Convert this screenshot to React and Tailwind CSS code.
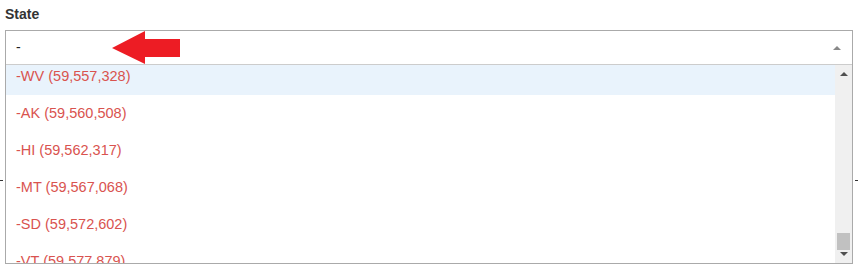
const states = [
  { code: 'WV', total: '59,557,328' },
  { code: 'AK', total: '59,560,508' },
  { code: 'HI', total: '59,562,317' },
  { code: 'MT', total: '59,567,068' },
  { code: 'SD', total: '59,572,602' },
  { code: 'VT', total: '59,577,879' },
];

function Triangle({ dir = 'up', color = '#505050', w = 8, h = 4 }) {
  const pts = dir === 'up' ? `0,${h} ${w / 2},0 ${w},${h}` : `0,0 ${w / 2},${h} ${w},0`;
  return (
    <svg width={w} height={h} viewBox={`0 0 ${w} ${h}`}>
      <polygon points={pts} fill={color} />
    </svg>
  );
}

function FakeScrollbar() {
  return (
    <div className="w-[17px] flex flex-col bg-[#f0f0f0]">
      <div className="h-[17px] flex items-center justify-center">
        <Triangle dir="up" w={8} h={4} />
      </div>
      <div className="flex-1 flex flex-col justify-end items-center">
        <div className="w-[13px] h-[17px] bg-[#c1c1c1]" />
      </div>
      <div className="h-[13px] flex justify-center pt-[2px]">
        <Triangle dir="down" w={8} h={4} />
      </div>
    </div>
  );
}

export default function App() {
  return (
    <div className="w-[858px] h-[271px] bg-white relative overflow-hidden font-['Liberation_Sans',Arial,sans-serif]">
      {/* dashed line behind the dropdown */}
      <div className="absolute left-0 right-0 top-[180px] border-t border-dashed border-[#333]" />

      <div className="relative pt-[4px] pl-[5px]">
        <div className="text-[14px] leading-[20px] font-bold text-[#333] mb-[6px]">State</div>

        <div className="w-[848px] h-[234px] border border-[#aaa] bg-white flex flex-col">
          <div className="h-[34px] flex items-center justify-between pl-[10px] pr-[11px] border-b border-[#ccc]">
            <span className="text-[14px] text-[#222]">-</span>
            <Triangle dir="up" color="#888" w={8} h={4} />
          </div>

          <div className="flex-1 flex min-h-0">
            <ul className="flex-1 overflow-hidden">
              <div className="-mt-[7px]">
                {states.map((s, i) => (
                  <li
                    key={s.code}
                    className={`h-[37px] flex items-center pl-[10px] text-[14.5px] text-[#d9534f] ${i === 0 ? 'bg-[#e9f3fc]' : ''}`}
                  >
                    -{s.code} ({s.total})
                  </li>
                ))}
              </div>
            </ul>
            <FakeScrollbar />
          </div>
        </div>
      </div>

      {/* red annotation arrow */}
      <svg className="absolute left-[110px] top-[30px]" width="72" height="36" viewBox="0 0 72 36">
        <polygon points="2,18 35,1 35,9 70,9 70,27 35,27 35,34" fill="#ed1c24" />
      </svg>
    </div>
  );
}
